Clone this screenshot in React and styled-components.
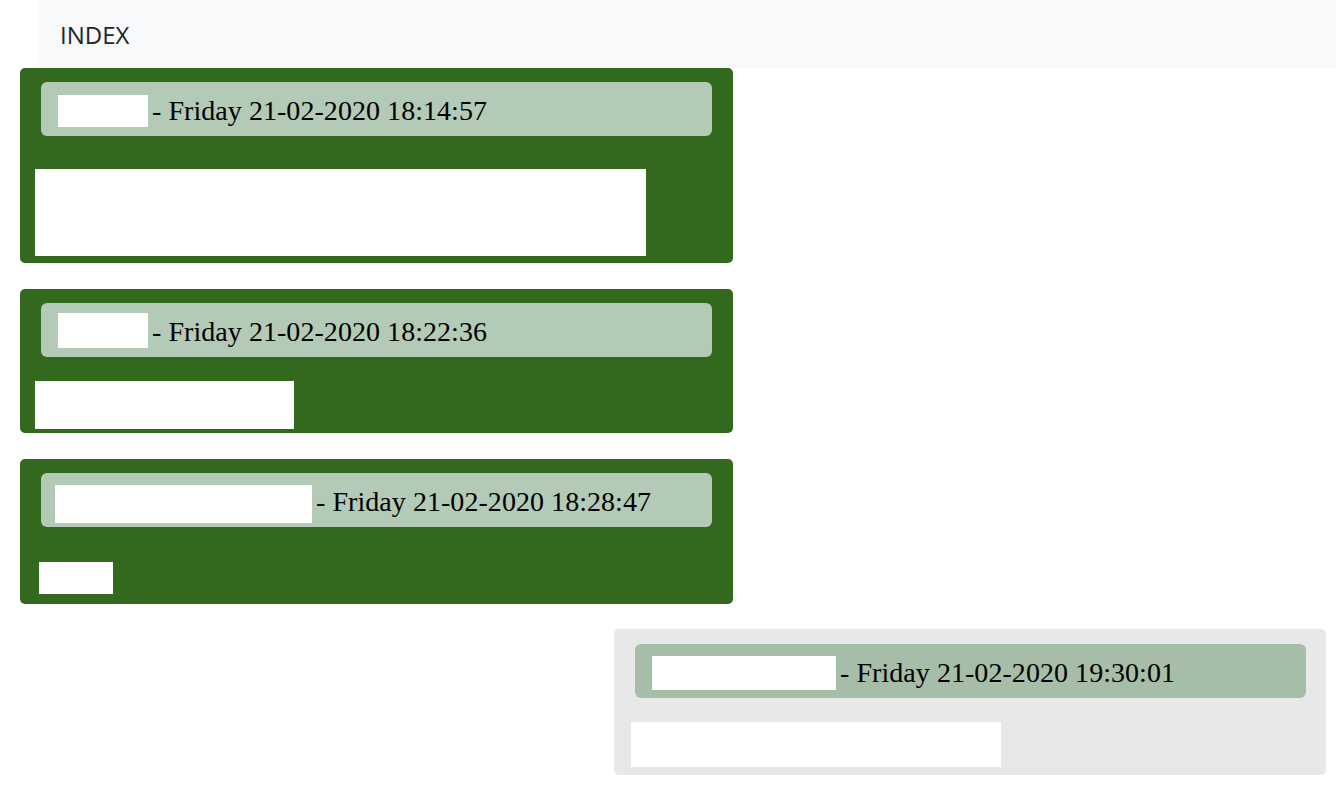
import React from 'react';
import styled, { createGlobalStyle } from 'styled-components';

const GlobalStyle = createGlobalStyle`
  body {
    margin: 0;
    background: #ffffff;
    font-family: "Open Sans", "Liberation Sans", sans-serif;
  }
`;

const Navbar = styled.nav`
  margin-left: 39px;
  height: 68px;
  padding-left: 21px;
  display: flex;
  align-items: center;
  background-color: #f8f9fa;
`;

const Brand = styled.span`
  font-size: 24px;
  color: #212529;
`;

const List = styled.div`
  display: flex;
  flex-direction: column;
  gap: 26px;
  padding: 0 10px 0 20px;
`;

const Card = styled.div`
  width: ${p => (p.mine ? '712px' : '713px')};
  align-self: ${p => (p.mine ? 'flex-end' : 'flex-start')};
  margin-top: ${p => (p.mine ? '-1px' : '0')};
  padding-top: ${p => (p.mine ? '15px' : '14px')};
  box-sizing: border-box;
  border-radius: 5px;
  background-color: ${p => (p.mine ? '#e8e8e8' : '#33691e')};
`;

const Header = styled.div`
  margin: 0 ${p => (p.mine ? '20px' : '21px')} 0 21px;
  height: 54px;
  box-sizing: border-box;
  padding: 3px 0 0 ${p => p.pad}px;
  display: flex;
  align-items: center;
  border-radius: 6px;
  background-color: ${p => (p.mine ? '#a6bda8' : '#b3cab6')};
  font-family: "Palatino Linotype", "Book Antiqua", "Liberation Serif", serif;
  font-size: 28px;
  color: #000;
`;

const Name = styled.span`
  display: inline-block;
  align-self: flex-start;
  width: ${p => p.w}px;
  height: ${p => p.h}px;
  margin: ${p => p.top - 3}px 4px 0 0;
  background-color: #ffffff;
`;

const Stamp = styled.span`
  white-space: nowrap;
  letter-spacing: 0.05px;
`;

const Body = styled.div`
  width: ${p => p.w}px;
  height: ${p => p.h}px;
  margin: ${p => p.mt}px 0 ${p => p.mb}px ${p => p.ml}px;
  background-color: #ffffff;
`;

const messages = [
  { time: 'Friday 21-02-2020 18:14:57', pad: 17, name: [90, 32, 13], body: { w: 611, h: 87, mt: 33, mb: 7, ml: 15 } },
  { time: 'Friday 21-02-2020 18:22:36', pad: 17, name: [90, 35, 10], body: { w: 259, h: 48, mt: 24, mb: 4, ml: 15 } },
  { time: 'Friday 21-02-2020 18:28:47', pad: 14, name: [257, 38, 12], body: { w: 74, h: 32, mt: 35, mb: 10, ml: 19 } },
  { time: 'Friday 21-02-2020 19:30:01', pad: 17, name: [184, 34, 12], body: { w: 370, h: 45, mt: 24, mb: 8, ml: 17 }, mine: true }
];

function App() {
  return (
    <>
      <GlobalStyle />
      <Navbar>
        <Brand>INDEX</Brand>
      </Navbar>
      <List>
        {messages.map((m, idx) => (
          <Card key={'msg ' + idx} mine={m.mine}>
            <Header mine={m.mine} pad={m.pad}>
              <Name w={m.name[0]} h={m.name[1]} top={m.name[2]} />
              <Stamp>- {m.time}</Stamp>
            </Header>
            <Body {...m.body} />
          </Card>
        ))}
      </List>
    </>
  );
}

export default App;
